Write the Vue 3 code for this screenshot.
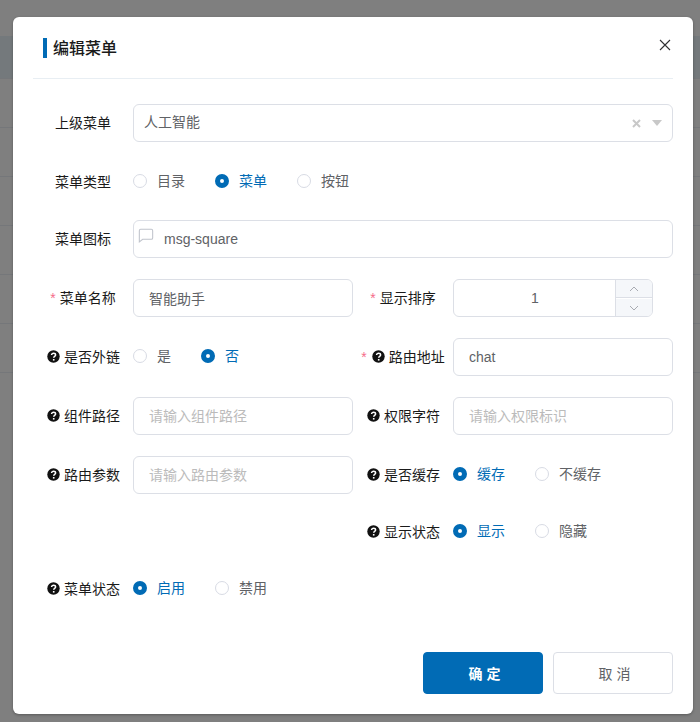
<script setup>
const input = (label, extra = {}) => ({ label, type: 'input', ...extra })
const radio = (label, options, selected, extra = {}) => ({ label, type: 'radio', options, selected, ...extra })

const rows = [
  { fields: [{ label: '上级菜单', type: 'select', value: '人工智能', wide: true }] },
  { short: true, fields: [radio('菜单类型', ['目录', '菜单', '按钮'], '菜单', { wide: true })] },
  { fields: [input('菜单图标', { value: 'msg-square', icon: true, wide: true })] },
  {
    fields: [
      input('菜单名称', { value: '智能助手', star: true }),
      { label: '显示排序', type: 'number', value: '1', star: true }
    ]
  },
  {
    fields: [
      radio('是否外链', ['是', '否'], '否', { tip: true }),
      input('路由地址', { value: 'chat', star: true, tip: true })
    ]
  },
  {
    fields: [
      input('组件路径', { placeholder: '请输入组件路径', tip: true }),
      input('权限字符', { placeholder: '请输入权限标识', tip: true })
    ]
  },
  {
    short: true,
    fields: [
      input('路由参数', { placeholder: '请输入路由参数', tip: true }),
      radio('是否缓存', ['缓存', '不缓存'], '缓存', { tip: true })
    ]
  },
  { short: true, fields: [{ spacer: true }, radio('显示状态', ['显示', '隐藏'], '显示', { tip: true })] },
  { short: true, fields: [radio('菜单状态', ['启用', '禁用'], '启用', { tip: true })] }
]
</script>

<template>
  <div class="page">
    <div class="table-head"></div>
    <div v-for="n in 6" :key="n" class="table-row"></div>
    <div class="mask"></div>

    <div class="dialog">
      <header class="dialog-head">
        <h2 class="title">编辑菜单</h2>
        <svg class="close" width="12" height="12" viewBox="0 0 12 12">
          <path d="M1 1l10 10M11 1L1 11" stroke="#303133" stroke-width="1.1" fill="none" />
        </svg>
      </header>

      <div class="form">
        <div v-for="(row, r) in rows" :key="r" class="row" :class="{ short: row.short }">
          <div
            v-for="(f, i) in row.fields"
            :key="i"
            class="item"
            :class="{ wide: f.wide }"
          >
            <template v-if="!f.spacer">
              <label class="label">
                <span v-if="f.star" class="star">*</span>
                <svg v-if="f.tip" class="tip" width="13" height="13" viewBox="0 0 13 13">
                  <circle cx="6.5" cy="6.5" r="6.2" fill="#111" />
                  <path
                    d="M4.6 5.1c0-1.1.9-1.8 2-1.8s2 .7 2 1.7c0 1.4-1.9 1.4-1.9 2.7"
                    fill="none"
                    stroke="#fff"
                    stroke-width="1.5"
                  />
                  <rect x="5.9" y="9" width="1.6" height="1.6" fill="#fff" />
                </svg>
                <span>{{ f.label }}</span>
              </label>

              <div v-if="f.type === 'select'" class="control select">
                <span class="select-value">{{ f.value }}</span>
                <svg class="select-clear" width="9" height="9" viewBox="0 0 9 9">
                  <path d="M1 1l7 7M8 1L1 8" stroke="#c8c8c8" stroke-width="2" fill="none" />
                </svg>
                <svg class="select-arrow" width="10" height="6" viewBox="0 0 10 6">
                  <path d="M0 0h10L5 6z" fill="#c8c8c8" />
                </svg>
              </div>

              <div v-else-if="f.type === 'radio'" class="radios">
                <span
                  v-for="o in f.options"
                  :key="o"
                  class="radio"
                  :class="{ checked: o === f.selected }"
                >
                  <i class="dot"></i><span class="radio-text">{{ o }}</span>
                </span>
              </div>

              <div v-else-if="f.type === 'number'" class="control number">
                <span class="number-value">{{ f.value }}</span>
                <div class="stepper">
                  <span class="step">
                    <svg width="10" height="6" viewBox="0 0 10 6">
                      <path d="M1 5l4-4 4 4" stroke="#a8abb2" fill="none" />
                    </svg>
                  </span>
                  <span class="step">
                    <svg width="10" height="6" viewBox="0 0 10 6">
                      <path d="M1 1l4 4 4-4" stroke="#a8abb2" fill="none" />
                    </svg>
                  </span>
                </div>
              </div>

              <div v-else class="control field" :class="{ 'has-icon': f.icon }">
                <svg
                  v-if="f.icon"
                  class="field-icon"
                  width="16"
                  height="16"
                  viewBox="0 0 24 24"
                  fill="none"
                  stroke="#c0c4cc"
                  stroke-width="1.6"
                >
                  <path d="M22 15a2 2 0 0 1-2 2H7l-5 4V4a2 2 0 0 1 2-2h16a2 2 0 0 1 2 2z" />
                </svg>
                <input :value="f.value" :placeholder="f.placeholder" readonly />
              </div>
            </template>
          </div>
        </div>
      </div>

      <footer class="footer">
        <button class="btn primary" type="button">确 定</button>
        <button class="btn" type="button">取 消</button>
      </footer>
    </div>
  </div>
</template>

<style>
html,
body {
  margin: 0;
  background: #fff;
}
</style>

<style scoped>
.page {
  position: relative;
  height: 722px;
  overflow: hidden;
  padding-top: 36px;
  box-sizing: border-box;
  font-family: "Liberation Sans", "Noto Sans CJK SC", sans-serif;
  font-size: 14px;
}
.table-head {
  height: 42px;
  background: #e9f2f9;
  border-bottom: 1px solid #ebeef5;
}
.table-row {
  height: 48px;
  border-bottom: 1px solid #ebeef5;
}
.mask {
  position: absolute;
  inset: 0;
  background: rgba(0, 0, 0, 0.5);
}
.dialog {
  position: absolute;
  left: 13px;
  top: 17px;
  width: 680px;
  height: 697px;
  box-sizing: border-box;
  background: #fff;
  border-radius: 6px;
  box-shadow: 0 1px 3px rgba(0, 0, 0, 0.3);
}
.dialog-head {
  position: relative;
  height: 62px;
  box-sizing: border-box;
  margin: 0 20px;
  padding: 21px 10px 0;
  border-bottom: 1px solid #e8eef3;
}
.title {
  margin: 0;
  height: 20px;
  padding-left: 6px;
  border-left: 4px solid #016bb5;
  font-size: 16px;
  font-weight: 500;
  line-height: 21px;
  color: #1a1a1a;
}
.close {
  position: absolute;
  right: 2px;
  top: 22px;
}
.form {
  padding: 25px 20px 0;
}
.row {
  display: flex;
  margin-bottom: 21px;
}
.row.short {
  height: 36px;
}
.item {
  display: flex;
  align-items: flex-start;
  width: 320px;
}
.item.wide {
  width: 640px;
}
.label {
  width: 100px;
  flex: none;
  text-align: center;
  line-height: 38px;
  color: #1a1a1a;
  white-space: nowrap;
}
.star {
  color: #f56c8a;
  margin-right: 4px;
}
.tip {
  margin: 0 4px 0 1px;
  vertical-align: -1px;
}
.control {
  position: relative;
  flex: 1;
  height: 38px;
  box-sizing: border-box;
  border: 1px solid #dcdfe6;
  border-radius: 6px;
  color: #606266;
}
.select {
  display: flex;
  align-items: center;
  padding: 0 10px;
}
.select-value {
  flex: 1;
  margin-top: -4px;
}
.select-clear {
  margin-right: 11px;
  margin-top: 1px;
}
.select-arrow {
  margin-top: -1px;
}
.field input {
  display: block;
  width: 100%;
  height: 100%;
  box-sizing: border-box;
  border: 0;
  outline: 0;
  padding: 0 15px;
  background: transparent;
  border-radius: 6px;
  font: inherit;
  color: #606266;
}
.field input::placeholder {
  color: #bbb;
  opacity: 1;
}
.field.has-icon input {
  padding-left: 30px;
}
.field-icon {
  position: absolute;
  left: 4px;
  top: 7px;
}
.number {
  flex: none;
  width: 200px;
  display: flex;
  align-items: center;
  justify-content: center;
  padding-right: 36px;
}
.number-value {
  font-size: 14px;
}
.stepper {
  position: absolute;
  right: 0;
  top: 0;
  bottom: 0;
  width: 36px;
  display: flex;
  flex-direction: column;
  gap: 1px;
  border-left: 1px solid #dcdfe6;
  border-radius: 0 5px 5px 0;
  overflow: hidden;
}
.step {
  flex: 1;
  display: flex;
  align-items: center;
  justify-content: center;
  background: #f5f7fa;
}
.step:first-child {
  border-bottom: 1px solid #dcdfe6;
}
.radios {
  display: flex;
  height: 36px;
  align-items: center;
}
.radio {
  display: flex;
  align-items: center;
  margin-right: 30px;
  color: #606266;
  white-space: nowrap;
}
.radio.checked {
  color: #016bb5;
}
.radio-text {
  margin-top: -2px;
}
.dot {
  width: 14px;
  height: 14px;
  box-sizing: border-box;
  margin-right: 10px;
  border: 1px solid #d8dbe4;
  border-radius: 50%;
}
.checked .dot {
  border: 5px solid #016bb5;
  background: #fff;
}
.footer {
  display: flex;
  justify-content: flex-end;
  gap: 10px;
  padding: 25px 20px 0;
}
.btn {
  width: 120px;
  height: 42px;
  box-sizing: border-box;
  border: 1px solid #dcdfe6;
  border-radius: 4px;
  background: #fff;
  color: #606266;
  font: inherit;
  padding-left: 9px;
}
.btn.primary {
  border-color: #016bb5;
  background: #016bb5;
  color: #fff;
  font-weight: 700;
}
</style>
